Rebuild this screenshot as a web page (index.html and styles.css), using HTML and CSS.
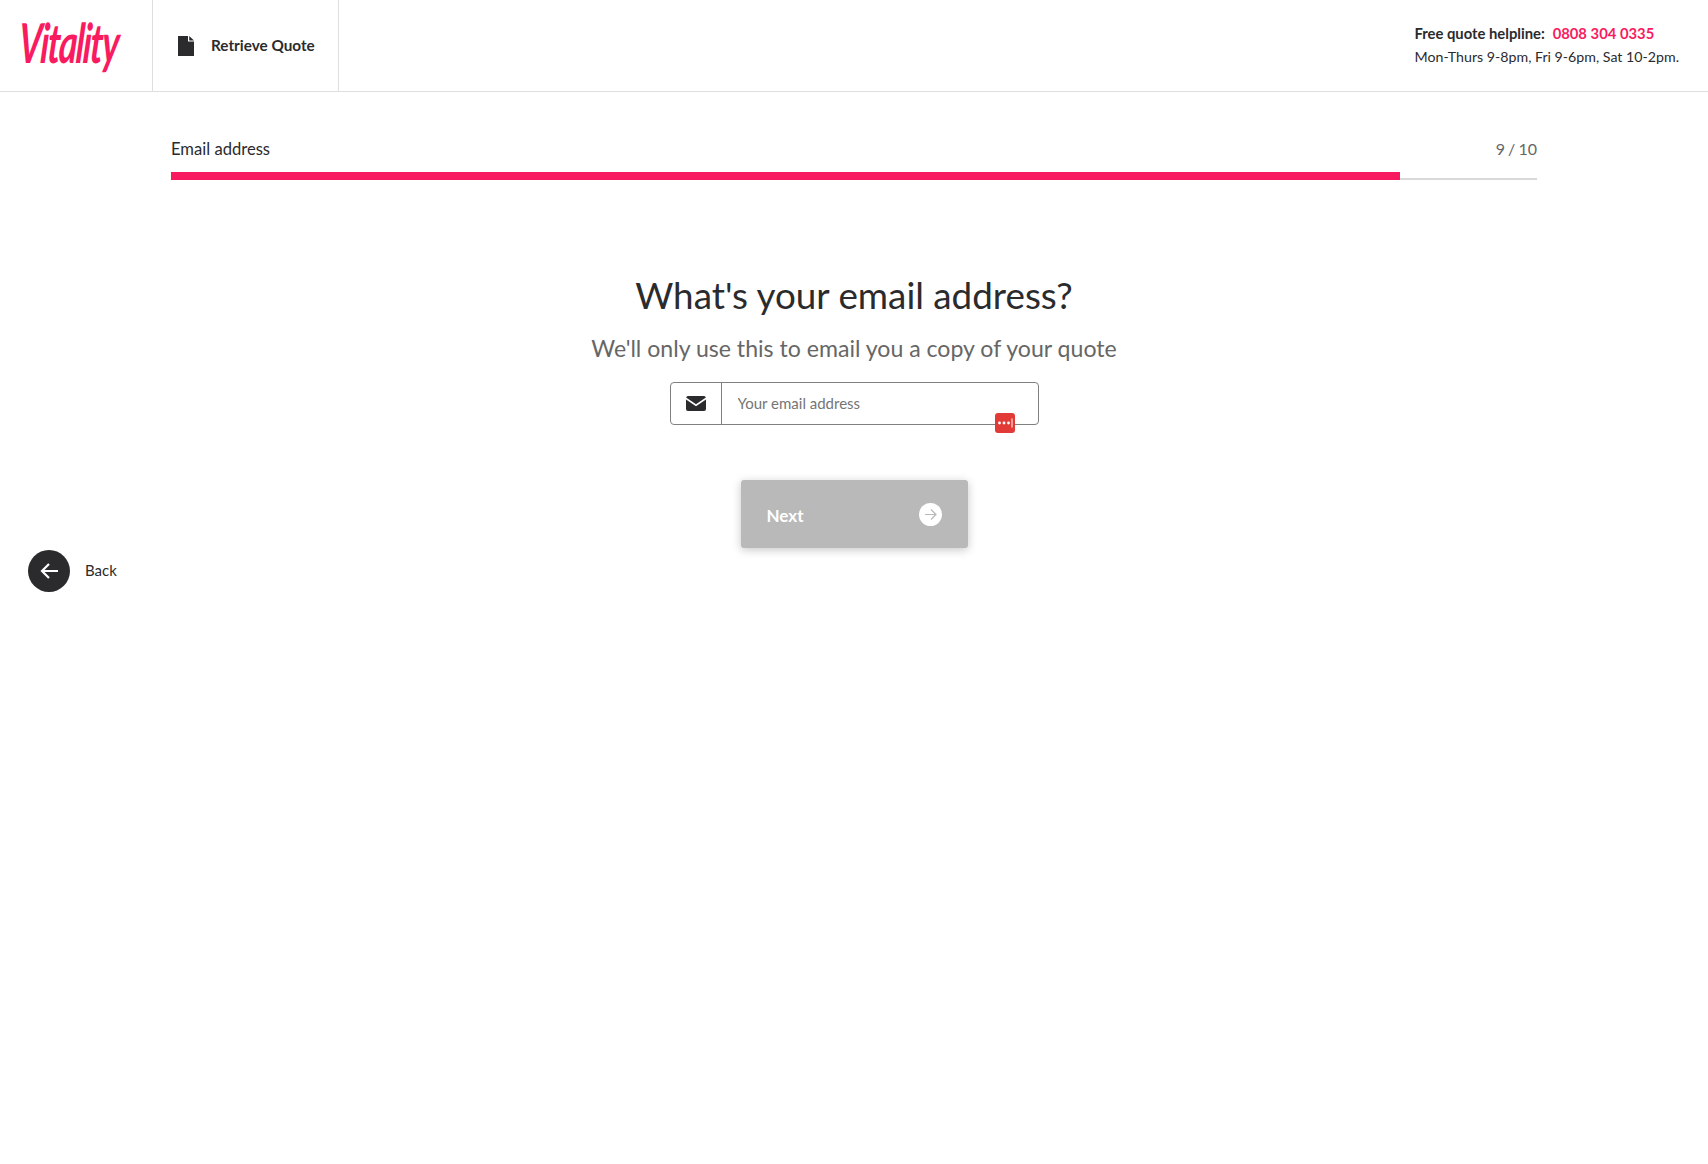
FILE: index.html
```html
<!DOCTYPE html>
<html lang="en">
<head>
    <meta charset="UTF-8">
    <meta name="viewport" content="width=device-width, initial-scale=1.0">
    <title>Email address</title>
    <link rel="stylesheet" href="styles.css">
</head>
<body>
    <header class="topbar">
        <div class="logo-cell"><span class="logo">Vitality</span></div>
        <a class="retrieve" href="#">
            <svg class="file-icon" viewBox="0 0 16 20" width="16" height="20"><path fill="#2b2b2d" d="M0 0h10v5.5h6V20H0zM11.2 0L16 4.4h-4.8z"/></svg>
            <span class="retrieve-text">Retrieve Quote</span>
        </a>
        <div class="helpline">
            <p class="helpline-top"><b>Free quote helpline:</b> <span class="phone">0808 304 0335</span></p>
            <p class="helpline-hours">Mon-Thurs 9-8pm, Fri 9-6pm, Sat 10-2pm.</p>
        </div>
    </header>

    <section class="progress">
        <div class="progress-text">
            <span class="progress-label">Email address</span>
            <span class="progress-count">9 / 10</span>
        </div>
        <div class="progress-track"><div class="progress-fill" style="width: 90%"></div></div>
    </section>

    <main class="question">
        <h1>What's your email address?</h1>
        <p class="hint">We'll only use this to email you a copy of your quote</p>
        <div class="email-field">
            <span class="email-icon">
                <svg viewBox="0 0 20 15" width="20" height="15"><path fill="#2b2b2d" d="M2 0h16a2 2 0 0 1 1.9 1.5L10 8.2.1 1.5A2 2 0 0 1 2 0zM0 3.4l10 6.8 10-6.8V13a2 2 0 0 1-2 2H2a2 2 0 0 1-2-2z"/></svg>
            </span>
            <input class="email-input" type="text" placeholder="Your email address">
            <span class="pass-badge">
                <svg viewBox="0 0 20 20" width="20" height="20"><circle cx="4.5" cy="10" r="1.4" fill="#fff"/><circle cx="9" cy="10" r="1.4" fill="#fff"/><circle cx="13.5" cy="10" r="1.4" fill="#fff"/><path stroke="#fff" stroke-width="1" d="M17 5.5v9"/></svg>
            </span>
        </div>
        <button class="next-btn" type="button">
            <span class="next-text">Next</span>
            <svg viewBox="0 0 23 23" width="23" height="23"><circle cx="11.5" cy="11.5" r="11.5" fill="#fff"/><path fill="none" stroke="#b9b9b9" stroke-width="1.2" d="M6 11.5h11M12 6.5l5 5-5 5"/></svg>
        </button>
    </main>

    <a class="back" href="#">
        <span class="back-circle">
            <svg viewBox="0 0 20 18" width="20" height="18"><path fill="none" stroke="#fff" stroke-width="2.2" d="M19 9H3M10 2L3 9l7 7"/></svg>
        </span>
        <span class="back-text">Back</span>
    </a>
</body>
</html>
```

FILE: styles.css
```css
body {
    margin: 0;
    font-family: 'Lato', sans-serif;
    color: #2b2b2d;
    background: white;
}
p, h1 {
    margin: 0;
}
a {
    color: inherit;
    text-decoration: none;
}
.topbar {
    display: flex;
    align-items: stretch;
    height: 91px;
    border-bottom: 1px solid #dedede;
}
.logo-cell {
    width: 153px;
    display: flex;
    align-items: center;
    justify-content: center;
    box-sizing: border-box;
    border-right: 1px solid #dedede;
    overflow: hidden;
}
.logo {
    font-family: 'Lato', sans-serif;
    font-style: italic;
    font-weight: 700;
    font-size: 50px;
    letter-spacing: -2px;
    color: #f91b5f;
    transform: translate(-7px, -4px) scale(0.71, 1.1) skewX(-6deg);
}
.retrieve {
    width: 186px;
    display: flex;
    align-items: center;
    gap: 17px;
    padding-left: 25px;
    box-sizing: border-box;
    border-right: 1px solid #dedede;
    font-size: 15.3px;
    font-weight: 700;
}
.retrieve-text {
    margin-bottom: 2px;
}
.helpline {
    margin-left: auto;
    padding: 21px 29px 0 0;
    font-size: 14.2px;
    line-height: 24px;
}
.helpline-top {
    font-size: 14.8px;
}
.helpline-top b {
    margin-right: 4px;
}
.phone {
    color: #f91b5f;
    font-weight: 700;
}
.progress {
    margin: 45px 171px 0 171px;
}
.progress-text {
    display: flex;
    justify-content: space-between;
    font-size: 16.6px;
    line-height: 24px;
}
.progress-count {
    font-size: 16px;
    word-spacing: -1px;
    color: #666;
}
.progress-track {
    margin-top: 11px;
    height: 8px;
    border-bottom: 2px solid #d8d8d8;
    box-sizing: border-box;
}
.progress-fill {
    height: 8px;
    background: #f91b5f;
}
.question {
    display: flex;
    flex-direction: column;
    align-items: center;
    margin-top: 90px;
}
h1 {
    font-size: 36.8px;
    font-weight: 400;
    line-height: 50px;
}
.hint {
    margin-top: 10px;
    font-size: 23.1px;
    line-height: 36px;
    color: #666;
}
.email-field {
    position: relative;
    display: flex;
    width: 369px;
    height: 43px;
    margin-top: 16px;
    box-sizing: border-box;
    border: 1px solid #808080;
    border-radius: 4px;
}
.email-icon {
    width: 50px;
    display: flex;
    align-items: center;
    justify-content: center;
    border-right: 1px solid #808080;
}
.email-input {
    flex: 1;
    min-width: 0;
    height: 39px;
    border: none;
    outline: none;
    background: none;
    padding: 0 16px;
    font-family: inherit;
    font-size: 15px;
}
.email-input::placeholder {
    color: #757575;
    opacity: 1;
}
.pass-badge {
    position: absolute;
    right: 23px;
    top: 30px;
    width: 20px;
    height: 20px;
    border-radius: 3px;
    background: #e23a36;
}
.pass-badge svg {
    display: block;
}
.next-btn {
    display: flex;
    align-items: center;
    justify-content: space-between;
    width: 227px;
    height: 68px;
    margin-top: 55px;
    padding: 0 26px;
    border: none;
    border-radius: 3px;
    background: #b9b9b9;
    color: white;
    font-family: inherit;
    font-size: 17px;
    font-weight: 700;
    box-shadow: 0 2px 10px rgba(0, 0, 0, 0.22);
}
.next-text {
    margin-top: 2px;
}
.back {
    display: flex;
    align-items: center;
    gap: 15px;
    width: max-content;
    margin: 2px 0 0 28px;
    font-size: 15px;
}
.back-circle {
    width: 42px;
    height: 42px;
    display: flex;
    align-items: center;
    justify-content: center;
    border-radius: 50%;
    background: #2b2b2d;
}
.back-text {
    margin-bottom: 2px;
}
```
